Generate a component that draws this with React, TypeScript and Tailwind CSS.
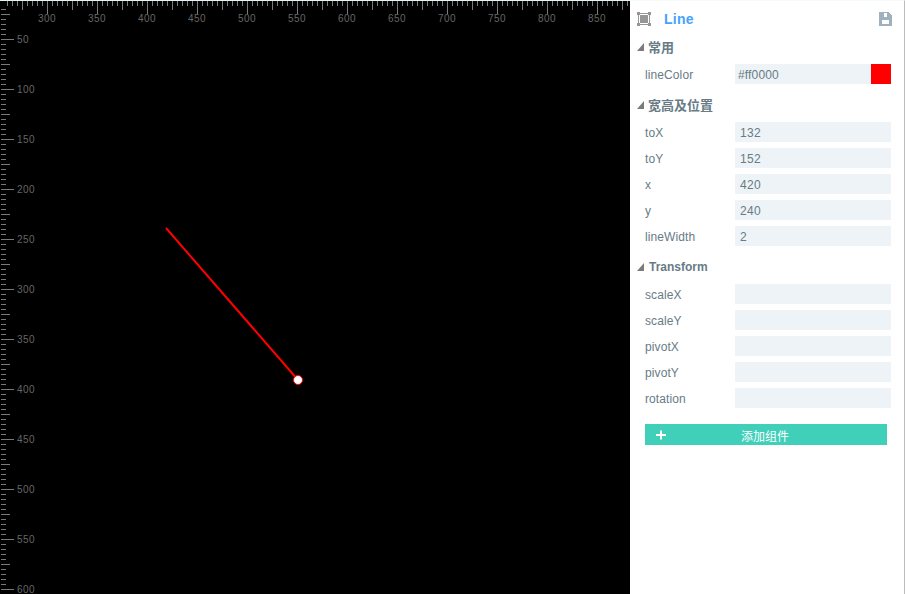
import React from "react";

const WIDTH = 630;
const HEIGHT = 594;

const tickLength = (value: number) => (value % 50 === 0 ? 13 : value % 25 === 0 ? 9 : 5);

const xTicks = Array.from({ length: 125 }, (_, i) => ({ pos: 7 + i * 5, value: 260 + i * 5 }));
const yTicks = Array.from({ length: 117 }, (_, i) => ({ pos: 9 + i * 5, value: 20 + i * 5 }));

function Stage() {
  return (
    <svg
      width={WIDTH}
      height={HEIGHT}
      className="block shrink-0 bg-black font-['Liberation_Sans',Arial,sans-serif] text-[10px]"
    >
      <rect width={WIDTH} height={1} fill="#e4f4f6" />
      <g fill="#7a7a7a" shapeRendering="crispEdges">
        {xTicks.map((t) => (
          <rect key={t.pos} x={t.pos} y={1} width={1} height={tickLength(t.value)} />
        ))}
        {yTicks.map((t) => (
          <rect key={t.pos} x={1} y={t.pos} width={tickLength(t.value)} height={1} />
        ))}
      </g>
      <g fill="#666666">
        {xTicks
          .filter((t) => t.value % 50 === 0)
          .map((t) => (
            <text key={t.value} x={t.pos - 9} y={22} textLength={17.5}>
              {t.value}
            </text>
          ))}
        {yTicks
          .filter((t) => t.value % 50 === 0)
          .map((t) => (
            <text key={t.value} x={17} y={t.pos + 4} textLength={t.value < 100 ? 11.5 : 17.5}>
              {t.value}
            </text>
          ))}
      </g>
      <line x1={166} y1={228} x2={298} y2={380} stroke="#ff0000" strokeWidth={2} />
      <circle cx={298} cy={380} r={4.5} fill="#fff" stroke="#ff0000" strokeWidth={1} />
    </svg>
  );
}

function ComponentIcon() {
  return (
    <svg width="14" height="14" viewBox="0 0 14 14" fill="#969696" shapeRendering="crispEdges">
      <path d="M0 0h3v3H0zM11 0h3v3h-3zM0 11h3v3H0zM11 11h3v3h-3z" />
      <path d="M3 1h8v1H3zM3 12h8v1H3zM1 3h1v8H1zM12 3h1v8h-1zM3 3h8v8H3z" />
    </svg>
  );
}

function SaveIcon() {
  return (
    <svg width="13" height="14" viewBox="0 0 13 14" shapeRendering="crispEdges">
      <path
        fill="#9fb1bd"
        fillRule="evenodd"
        d="M0 0h10v1h1v1h1v1h1v11H0zM5 1v4h3V1zM3 8v4h7V8z"
      />
    </svg>
  );
}

function Section({ title, children }: { title: string; children: React.ReactNode }) {
  return (
    <section>
      <h2 className="flex h-8 items-center gap-[4px] pt-1 pl-[7px] text-[13px] font-bold">
        <svg width="7" height="8" viewBox="0 0 7 8" className="shrink-0">
          <path d="M7 0v8H0z" fill="#7b7b7b" />
        </svg>
        <span className={title === "Transform" ? "pl-px text-xs" : "pt-0.5"}>{title}</span>
      </h2>
      {children}
    </section>
  );
}

function Field({ label, value = "", color = false }: { label: string; value?: string; color?: boolean }) {
  return (
    <div className="flex h-[26px] items-center pl-[15px]">
      <label className="w-[90px] pt-0.5 text-xs tracking-[0.1px]">{label}</label>
      <div className="flex h-5 w-[156px] items-center justify-between bg-[#edf3f6]">
        <span
          className={
            color ? "pt-0.5 pl-[3px] text-xs tracking-[0.15px]" : "pt-0.5 pl-[5px] text-xs tracking-[0.3px]"
          }
        >
          {value}
        </span>
        {color && <span className="size-5 bg-[#ff0000]" />}
      </div>
    </div>
  );
}

export default function App() {
  return (
    <div className="flex h-[594px] w-[905px] overflow-hidden bg-white font-['Liberation_Sans','Noto_Sans_CJK_SC',sans-serif] text-[#687b85]">
      <Stage />
      <aside className="w-[275px] border-t border-r border-t-[#f5fafd] border-r-[#bcbcbc]">
        <header className="flex h-7 items-center pt-2 pr-3 pl-[7px]">
          <ComponentIcon />
          <h1 className="ml-[13px] grow text-sm font-bold tracking-[0.25px] text-[#46a3fc]">Line</h1>
          <SaveIcon />
        </header>
        <Section title="常用">
          <Field label="lineColor" value="#ff0000" color />
        </Section>
        <Section title="宽高及位置">
          <Field label="toX" value="132" />
          <Field label="toY" value="152" />
          <Field label="x" value="420" />
          <Field label="y" value="240" />
          <Field label="lineWidth" value="2" />
        </Section>
        <Section title="Transform">
          <Field label="scaleX" />
          <Field label="scaleY" />
          <Field label="pivotX" />
          <Field label="pivotY" />
          <Field label="rotation" />
        </Section>
        <button className="mt-[13px] ml-[15px] flex h-[21px] w-[242px] items-center bg-[#40d0ba] text-xs text-white">
          <svg width="10" height="10" viewBox="0 0 10 10" className="ml-[11px]">
            <path d="M5 0.5v9M0 5h10" stroke="#fff" strokeWidth="2" />
          </svg>
          <span className="ml-[75px] pt-1">添加组件</span>
        </button>
      </aside>
    </div>
  );
}
